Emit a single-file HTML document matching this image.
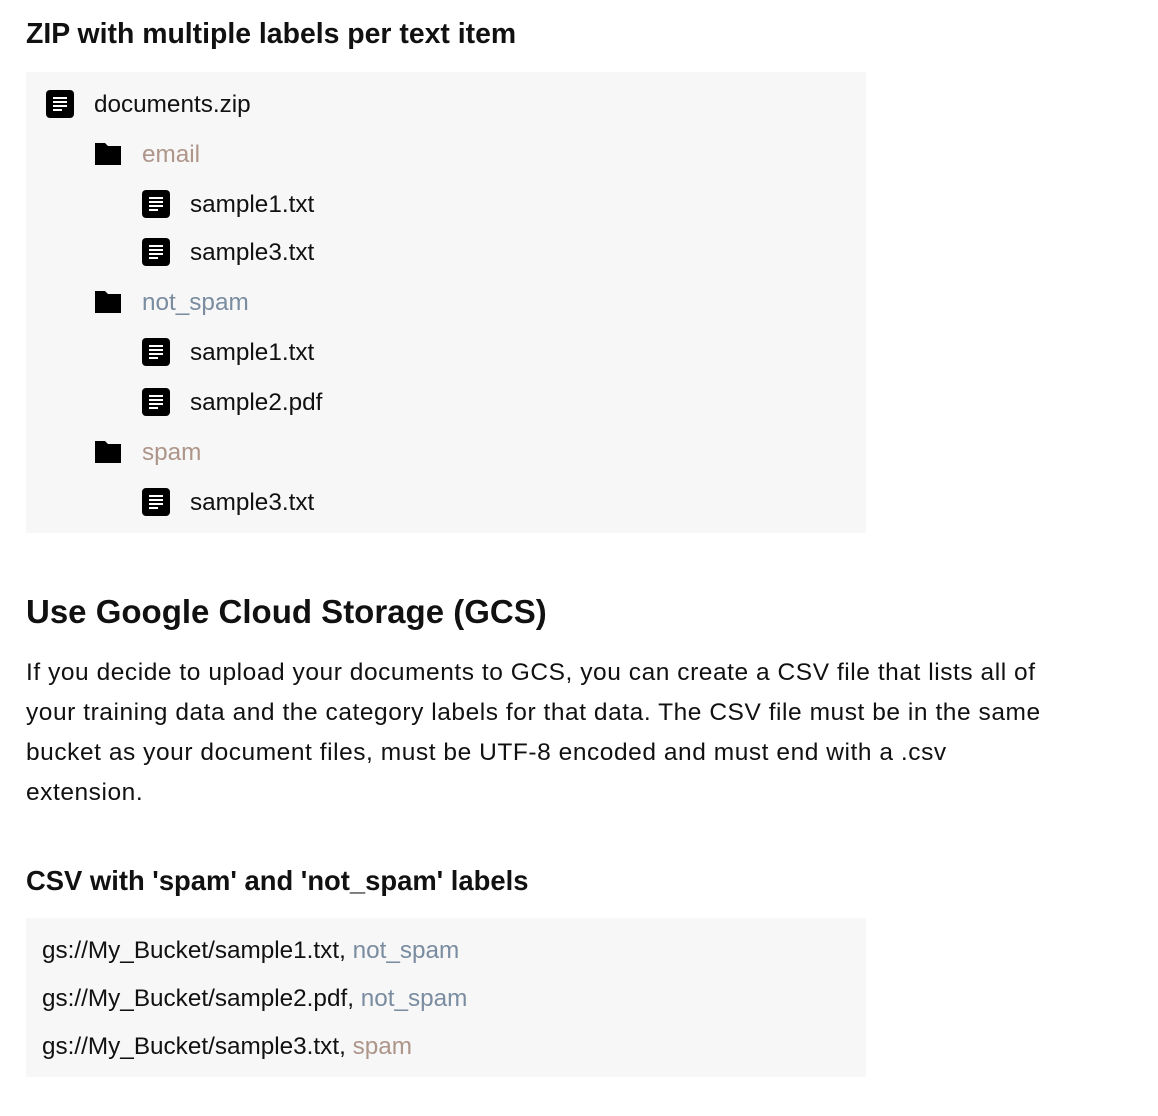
<!DOCTYPE html>
<html><head><meta charset="utf-8"><style>
body{margin:0;background:#fff;font-family:"Liberation Sans",sans-serif;color:#111;width:1158px;height:1116px;position:relative;overflow:hidden}
.a{position:absolute;white-space:nowrap}
h{position:absolute;font-weight:bold;white-space:nowrap;left:26px}
.box{position:absolute;left:26px;width:840px;background:#f7f7f7}
.row{position:absolute;font-size:24.3px;line-height:30px;height:30px}
.br{color:#ad9589}.bl{color:#7a8ca0}
svg{position:absolute}
p{position:absolute;left:26px;top:653px;margin:0;font-size:24.5px;line-height:40px;white-space:nowrap;letter-spacing:0.55px}
</style></head><body>
<h style="top:18px;font-size:28.4px">ZIP with multiple labels per text item</h>
<div class="box" style="top:72px;height:461px"></div>
<svg width="0" height="0"><defs>
<symbol id="d" viewBox="0 0 28 28"><rect width="28" height="28" rx="4" fill="#000"/><path d="M7 8h14M7 12h14M7 16h14M7 20h9" stroke="#fff" stroke-width="2"/></symbol>
<symbol id="f" viewBox="0 0 28 24"><path d="M1 1h10l3 3h13v19H1z" fill="#000"/></symbol>
</defs></svg>
<svg style="left:46px;top:90px" width="28" height="28"><use href="#d"/></svg><div class="a row" style="left:94px;top:90px">documents.zip</div>
<svg style="left:94px;top:142px" width="28" height="24"><use href="#f"/></svg><div class="a row br" style="left:142px;top:140px">email</div>
<svg style="left:142px;top:190px" width="28" height="28"><use href="#d"/></svg><div class="a row" style="left:190px;top:190px">sample1.txt</div>
<svg style="left:142px;top:238px" width="28" height="28"><use href="#d"/></svg><div class="a row" style="left:190px;top:238px">sample3.txt</div>
<svg style="left:94px;top:290px" width="28" height="24"><use href="#f"/></svg><div class="a row bl" style="left:142px;top:288px">not_spam</div>
<svg style="left:142px;top:338px" width="28" height="28"><use href="#d"/></svg><div class="a row" style="left:190px;top:338px">sample1.txt</div>
<svg style="left:142px;top:388px" width="28" height="28"><use href="#d"/></svg><div class="a row" style="left:190px;top:388px">sample2.pdf</div>
<svg style="left:94px;top:440px" width="28" height="24"><use href="#f"/></svg><div class="a row br" style="left:142px;top:438px">spam</div>
<svg style="left:142px;top:488px" width="28" height="28"><use href="#d"/></svg><div class="a row" style="left:190px;top:488px">sample3.txt</div>
<h style="top:593px;font-size:33px">Use Google Cloud Storage (GCS)</h>
<p>If you decide to upload your documents to GCS, you can create a CSV file that lists all of<br>your training data and the category labels for that data. The CSV file must be in the same<br>bucket as your document files, must be UTF-8 encoded and must end with a .csv<br>extension.</p>
<h style="top:865px;font-size:27.4px">CSV with 'spam' and 'not_spam' labels</h>
<div class="box" style="top:918px;height:159px"></div>
<div class="a row" style="left:42px;top:936px">gs://My_Bucket/sample1.txt, <span class="bl">not_spam</span></div>
<div class="a row" style="left:42px;top:984px">gs://My_Bucket/sample2.pdf, <span class="bl">not_spam</span></div>
<div class="a row" style="left:42px;top:1032px">gs://My_Bucket/sample3.txt, <span class="br">spam</span></div>
</body></html>
